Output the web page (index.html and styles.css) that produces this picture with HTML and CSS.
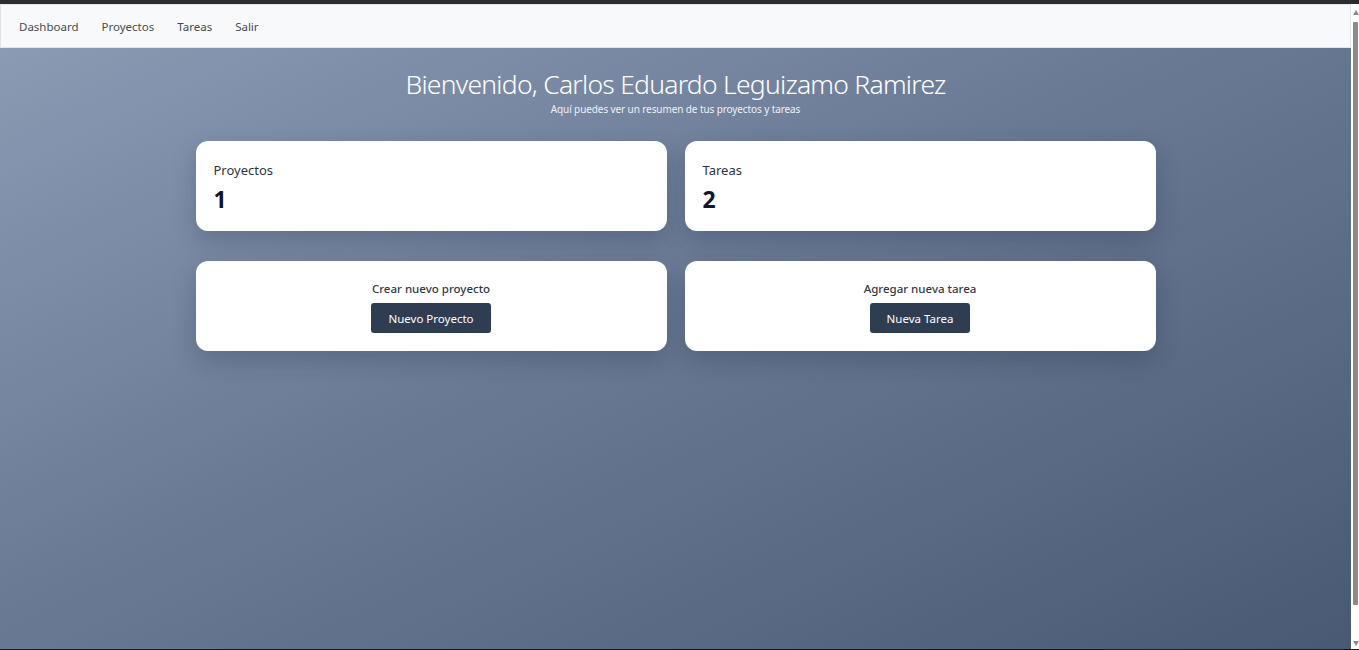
FILE: index.html
```html
<!DOCTYPE html>
<html lang="es">
<head>
<meta charset="utf-8">
<title>Dashboard</title>
<link rel="stylesheet" href="styles.css">
</head>
<body>
<div class="chrome-top"></div>
<div class="window">
  <div class="page">
    <nav class="navbar">
      <a class="nav-link" href="#">Dashboard</a>
      <a class="nav-link" href="#">Proyectos</a>
      <a class="nav-link" href="#">Tareas</a>
      <a class="nav-link" href="#">Salir</a>
    </nav>
    <main class="main">
      <header class="welcome">
        <h1 class="welcome-title">Bienvenido, Carlos Eduardo Leguizamo Ramirez</h1>
        <p class="welcome-sub">Aquí puedes ver un resumen de tus proyectos y tareas</p>
      </header>
      <section class="grid">
        <div class="card stat">
          <div class="stat-label">Proyectos</div>
          <div class="stat-value">1</div>
        </div>
        <div class="card stat">
          <div class="stat-label">Tareas</div>
          <div class="stat-value">2</div>
        </div>
        <div class="card action">
          <div class="action-label">Crear nuevo proyecto</div>
          <a class="btn" href="#">Nuevo Proyecto</a>
        </div>
        <div class="card action">
          <div class="action-label">Agregar nueva tarea</div>
          <a class="btn" href="#">Nueva Tarea</a>
        </div>
      </section>
    </main>
  </div>
  <div class="scrollbar">
    <div class="arrow-up"></div>
    <div class="thumb"></div>
    <div class="arrow-down"></div>
  </div>
</div>
<div class="chrome-bottom"></div>
</body>
</html>
```

FILE: styles.css
```css
* { box-sizing: border-box; }
html, body { margin: 0; padding: 0; height: 650px; overflow: hidden; }
body {
  font-family: "Noto Sans", "Open Sans", sans-serif;
  display: flex;
  flex-direction: column;
  background: #1f2023;
}
.chrome-top { height: 4px; background: #2b2d31; flex: none; }
.chrome-bottom { height: 1px; background: #1c1d20; flex: none; }
.window { flex: 1; display: flex; min-height: 0; }
.page {
  flex: 1;
  display: flex;
  flex-direction: column;
  background: linear-gradient(to bottom right, #8e9db6 0%, #6b7b96 45%, #4a5973 100%);
}
.navbar {
  height: 44px;
  flex: none;
  display: flex;
  align-items: center;
  gap: 23px;
  padding-left: 18px;
  background: #f8f9fa;
  border: 1px solid #e2e4e8;
}
.nav-link {
  font-size: 11.5px;
  color: #454b52;
  text-decoration: none;
}
.main { flex: 1; }
.welcome { text-align: center; color: #fff; padding-top: 18px; }
.welcome-title {
  margin: 0;
  font-size: 26.5px;
  font-weight: 300;
  line-height: 36px;
  letter-spacing: -0.75px;
}
.welcome-sub {
  margin: 0;
  font-size: 10px;
  line-height: 15px;
  color: #eef1f6;
  letter-spacing: -0.1px;
}
.grid {
  width: 960px;
  margin: 24px auto 0;
  display: grid;
  grid-template-columns: 1fr 1fr;
  column-gap: 18px;
  row-gap: 30px;
}
.card {
  background: #fff;
  border-radius: 12px;
  height: 90px;
  box-shadow: 0 10px 24px rgba(20, 30, 50, 0.22);
}
.stat { padding: 18px 18px; }
.stat-label {
  font-size: 13px;
  line-height: 22px;
  color: #2d3340;
}
.stat-value {
  margin-top: 4px;
  font-size: 23px;
  line-height: 28px;
  font-weight: 700;
  color: #0f172a;
}
.action {
  display: flex;
  flex-direction: column;
  align-items: center;
  padding-top: 20px;
}
.action-label {
  font-size: 11.5px;
  line-height: 16px;
  color: #333a46;
  font-weight: 500;
}
.btn {
  margin-top: 6px;
  height: 30px;
  padding: 0 17px;
  display: flex;
  align-items: center;
  background: #2f3d53;
  color: #fff;
  font-size: 11.5px;
  text-decoration: none;
  border-radius: 3px;
}
.scrollbar {
  width: 8px;
  flex: none;
  background: #fff;
  display: flex;
  flex-direction: column;
  align-items: center;
  padding: 6px 0 3px 1px;
}
.arrow-up {
  width: 0; height: 0;
  border-left: 3px solid transparent;
  border-right: 3px solid transparent;
  border-bottom: 5px solid #8a8a8a;
}
.thumb {
  margin-top: 7px;
  width: 5px;
  flex: 1;
  background: #8b8b8b;
  border-radius: 1px;
  margin-bottom: 36px;
}
.arrow-down {
  width: 0; height: 0;
  border-left: 3px solid transparent;
  border-right: 3px solid transparent;
  border-top: 5px solid #8a8a8a;
}
```
